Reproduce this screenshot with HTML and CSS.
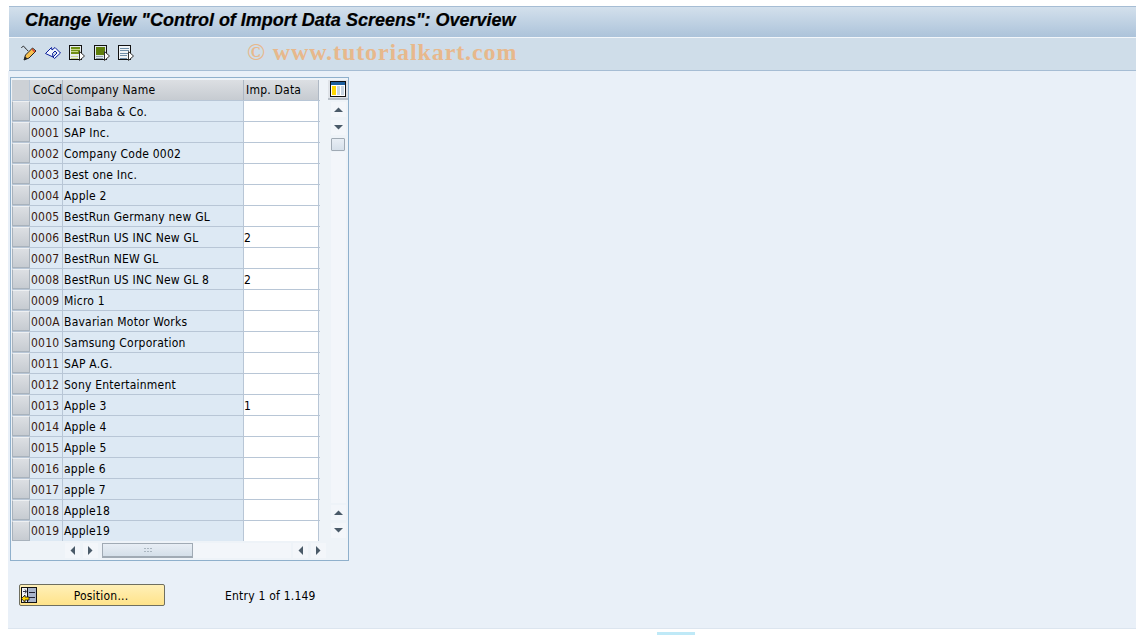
FILE: index.html
```html
<!DOCTYPE html>
<html lang="en">
<head>
<meta charset="utf-8">
<title>Change View</title>
<link rel="stylesheet" href="styles.css">
</head>
<body>
<svg class="defs" width="0" height="0">
  <defs>
    <g id="arrow-up"><path d="M1 6 L5.500 1.500 L10 6 Z" fill="#4a5a68"/></g>
    <g id="arrow-down"><path d="M1 1 L10 1 L5.500 5.500 Z" fill="#4a5a68"/></g>
    <g id="arrow-left"><path d="M6 1 L6 10 L1.500 5.500 Z" fill="#4a5a68"/></g>
    <g id="arrow-right"><path d="M1 1 L1 10 L5.500 5.500 Z" fill="#4a5a68"/></g>
  </defs>
</svg>
<div class="screen">
  <header class="title-bar"><h1 class="title">Change View "Control of Import Data Screens": Overview</h1></header>
  <div class="toolbar">
    <div class="tools">
      <svg class="tool" width="16" height="16" viewBox="0 0 16 16"><path d="M0.500 3 C1.500 0.500 3.500 1 4 3 C4.500 4 6 4 7 6" fill="none" stroke="#222" stroke-width="1"/><path d="M3 15 L4.500 10 L11.500 3 L15 6 L8 13 Z" fill="#f7c04e" stroke="#222" stroke-width="1"/><path d="M3 15 L4 11.500 L6.500 13.500 Z" fill="#222"/><path d="M11 4 L14 7" stroke="#d8452e" stroke-width="1.500"/></svg>
      <svg class="tool" width="16" height="16" viewBox="0 0 16 16"><path d="M0.500 8.500 L6.500 2.500 L7 5 L10 2.500 L15.500 8 L9.500 13.500 L8 12 L12 8 L10 6 L7.500 8.500 L8 12 Z" fill="#f2f6ff" stroke="#0a1e9c" stroke-width="1" stroke-linejoin="round"/></svg>
      <svg class="tool" width="16" height="16" viewBox="0 0 16 16"><rect x="0.500" y="0.500" width="12" height="14" fill="#e8eef0" stroke="#111"/><rect x="2" y="2" width="9" height="7" fill="#6f8f14"/><path d="M2 4.500 H11 M2 6.500 H9 M2 11.500 H9 M2 13.500 H9" stroke="#c9d88a"/><path d="M10.500 6.500 L15.500 11 L10.500 15.500 Z" fill="#fff" stroke="#333"/></svg>
      <svg class="tool shifted" width="16" height="16" viewBox="0 0 16 16"><rect x="0.500" y="0.500" width="12" height="14" fill="#dfe8ec" stroke="#111"/><rect x="2" y="2" width="9" height="8" fill="#5f7f0c"/><path d="M2 11.500 H9 M2 13.500 H9" stroke="#8a9aa8"/><path d="M10.500 6.500 L15.500 11 L10.500 15.500 Z" fill="#fff" stroke="#333"/></svg>
      <svg class="tool" width="16" height="16" viewBox="0 0 16 16"><rect x="0.500" y="0.500" width="12" height="14" fill="#eef3f6" stroke="#111"/><path d="M2 3.500 H11 M2 5.500 H11 M2 8.500 H10 M2 10.500 H9 M2 13.500 H9" stroke="#6f8ea8"/><path d="M10.500 6.500 L15.500 11 L10.500 15.500 Z" fill="#fff" stroke="#333"/></svg>
    </div>
    <div class="watermark">© www.tutorialkart.com</div>
  </div>
  <main class="content">
    <section class="table-box">
      <div class="table-main">
        <div class="grid">
          <div class="row head"><div class="sel"></div><div class="c1">CoCd</div><div class="c2">Company Name</div><div class="c3">Imp. Data</div></div>
          <div class="row"><div class="sel"></div><div class="c1">0000</div><div class="c2">Sai Baba &amp; Co.</div><div class="c3"></div></div>
          <div class="row"><div class="sel"></div><div class="c1">0001</div><div class="c2">SAP Inc.</div><div class="c3"></div></div>
          <div class="row"><div class="sel"></div><div class="c1">0002</div><div class="c2">Company Code 0002</div><div class="c3"></div></div>
          <div class="row"><div class="sel"></div><div class="c1">0003</div><div class="c2">Best one Inc.</div><div class="c3"></div></div>
          <div class="row"><div class="sel"></div><div class="c1">0004</div><div class="c2">Apple 2</div><div class="c3"></div></div>
          <div class="row"><div class="sel"></div><div class="c1">0005</div><div class="c2">BestRun Germany new GL</div><div class="c3"></div></div>
          <div class="row"><div class="sel"></div><div class="c1">0006</div><div class="c2">BestRun US INC New GL</div><div class="c3">2</div></div>
          <div class="row"><div class="sel"></div><div class="c1">0007</div><div class="c2">BestRun NEW GL</div><div class="c3"></div></div>
          <div class="row"><div class="sel"></div><div class="c1">0008</div><div class="c2">BestRun US INC New GL 8</div><div class="c3">2</div></div>
          <div class="row"><div class="sel"></div><div class="c1">0009</div><div class="c2">Micro 1</div><div class="c3"></div></div>
          <div class="row"><div class="sel"></div><div class="c1">000A</div><div class="c2">Bavarian Motor Works</div><div class="c3"></div></div>
          <div class="row"><div class="sel"></div><div class="c1">0010</div><div class="c2">Samsung Corporation</div><div class="c3"></div></div>
          <div class="row"><div class="sel"></div><div class="c1">0011</div><div class="c2">SAP A.G.</div><div class="c3"></div></div>
          <div class="row"><div class="sel"></div><div class="c1">0012</div><div class="c2">Sony Entertainment</div><div class="c3"></div></div>
          <div class="row"><div class="sel"></div><div class="c1">0013</div><div class="c2">Apple 3</div><div class="c3">1</div></div>
          <div class="row"><div class="sel"></div><div class="c1">0014</div><div class="c2">Apple 4</div><div class="c3"></div></div>
          <div class="row"><div class="sel"></div><div class="c1">0015</div><div class="c2">Apple 5</div><div class="c3"></div></div>
          <div class="row"><div class="sel"></div><div class="c1">0016</div><div class="c2">apple 6</div><div class="c3"></div></div>
          <div class="row"><div class="sel"></div><div class="c1">0017</div><div class="c2">apple 7</div><div class="c3"></div></div>
          <div class="row"><div class="sel"></div><div class="c1">0018</div><div class="c2">Apple18</div><div class="c3"></div></div>
          <div class="row last"><div class="sel"></div><div class="c1">0019</div><div class="c2">Apple19</div><div class="c3"></div></div>
        </div>
        <div class="vscroll">
          <div class="config"><svg width="16" height="16" viewBox="0 0 16 16"><rect x="0.500" y="0.500" width="15" height="15" fill="#fff" stroke="#111"/><rect x="1" y="1" width="14" height="3" fill="#1d5f9e"/><rect x="2" y="5" width="4" height="9" fill="#ffd800"/><rect x="7" y="5" width="3" height="9" fill="#c9d6e2"/><rect x="11" y="5" width="3" height="9" fill="#c9d6e2"/></svg></div>
          <div class="sbtn"><svg width="11" height="7"><use href="#arrow-up"/></svg></div>
          <div class="sbtn"><svg width="11" height="7"><use href="#arrow-down"/></svg></div>
          <div class="vthumb"></div>
          <div class="vtrack"></div>
          <div class="sbtn"><svg width="11" height="7"><use href="#arrow-up"/></svg></div>
          <div class="sbtn"><svg width="11" height="7"><use href="#arrow-down"/></svg></div>
        </div>
      </div>
      <div class="hscroll">
        <div class="sbtn h"><svg width="7" height="11"><use href="#arrow-left"/></svg></div>
        <div class="sbtn h"><svg width="7" height="11"><use href="#arrow-right"/></svg></div>
        <div class="hthumb"><svg width="8" height="5"><path d="M0 0.500h2M3 0.500h2M6 0.500h2M0 3.500h2M3 3.500h2M6 3.500h2" stroke="#aab6c0" stroke-width="1"/></svg></div>
        <div class="htrack"></div>
        <div class="sbtn h"><svg width="7" height="11"><use href="#arrow-left"/></svg></div>
        <div class="sbtn h"><svg width="7" height="11"><use href="#arrow-right"/></svg></div>
      </div>
    </section>
    <div class="actions">
      <button class="position" type="button">
        <svg class="pos-icon" width="16" height="16" viewBox="0 0 16 16"><rect x="0.500" y="0.500" width="15" height="15" fill="#a8b4cc" stroke="#111"/><rect x="1" y="1" width="5" height="14" fill="#f2f4f8"/><path d="M6.500 1V15" stroke="#111"/><path d="M8 5.500H14M8 10.500H14" stroke="#223"/><path d="M2 4.500H5M4 2.500L5.500 4.500L4 6.500" fill="none" stroke="#334" stroke-width="1"/><path d="M0.500 11.500L4 8V10H8V13H4V15.500Z" fill="#ffd400" stroke="#111" stroke-width="0.800"/></svg>
        <span class="pos-label">Position...</span>
      </button>
      <span class="entry">Entry 1 of 1.149</span>
    </div>
  </main>
</div>
<div class="corner-mark"></div>
</body>
</html>
```
FILE: styles.css
```css
html, body { margin: 0; padding: 0; background: #fff; height: 635px; overflow: hidden; }
body { position: relative; font-family: "DejaVu Sans Condensed", "DejaVu Sans", sans-serif; font-size: 12px; letter-spacing: 0.220px; color: #000; }
.defs { position: absolute; }
.screen { margin-left: 8px; padding-top: 6px; display: flex; flex-direction: column; }
.title-bar {
  margin-left: 1px; display: flex; align-items: center; padding: 0 0 3px 16px; height: 27px;
  background: linear-gradient(#d3e0ec, #acc3da); border-top: 1px solid #a6bdd4;
  border-bottom: 1px solid #f2f6fa;
}
.title { margin: 0; font: italic bold 18px "Liberation Sans", sans-serif; letter-spacing: 0; -webkit-text-stroke: 0.200px #000; color: #000; white-space: nowrap; }
.toolbar {
  height: 29px; margin-left: 1px; display: flex; align-items: center; padding: 0 0 3px 12px;
  background: #cfdde9; border-bottom: 1px solid #a6bdd4;
}
.tools { display: flex; gap: 8px; width: 226px; }
.tool { display: block; }
.shifted { margin-left: 1px; }
.watermark { font: bold 24px "Liberation Serif", serif; color: #e7b88c; white-space: nowrap; letter-spacing: 0.900px; }
.content { background: #e9f0f8; border-bottom: 1px solid #dce5ef; padding: 6px 0 0 2px; box-sizing: border-box; height: 558px; }
.table-box { width: 339px; height: 484px; box-sizing: border-box; border: 1px solid #8fb0cc; padding: 2px 0 0 1px; background: #eef3f8; }
.table-main { display: flex; height: 461px; }
.grid { width: 308px; }
.row { display: flex; height: 21px; box-sizing: border-box; border-bottom: 1px solid #b8c6d6; line-height: 22px; }
.row.last { border-bottom: 0; height: 20px; line-height: 20px; }
.head { line-height: 21px; }
.sel { width: 18px; box-sizing: border-box; background: linear-gradient(#dcdfe3, #c6cbd1); border: 1px solid #a8b2bc; border-top-color: #eef0f2; }
.c1 { width: 33px; box-sizing: border-box; padding-left: 1px; background: #dde9f4; border-right: 1px solid #b8c6d6; color: #3a1a10; white-space: nowrap; overflow: hidden; }
.c2 { width: 181px; box-sizing: border-box; padding-left: 1px; background: #dde9f4; border-right: 1px solid #b8c6d6; white-space: nowrap; overflow: hidden; }
.c3 { width: 75px; box-sizing: border-box; padding-left: 0; background: #fff; border-right: 1px solid #b8c6d6; }
.head .sel { background: #cdd1d6; border: 0; border-right: 1px solid #b8c6d6; }
.head .c1, .head .c2, .head .c3 { background: linear-gradient(#dcdfe3, #c6cbd1); border-right: 1px solid #aeb8c4; color: #000; padding-left: 3px; }
.head .c3 { padding-left: 2px; }
.vscroll { width: 20px; margin-left: 8px; display: flex; flex-direction: column; align-items: center; }
.config { width: 20px; height: 20px; display: flex; align-items: center; justify-content: center; background: #dfe3e8; border-bottom: 2px solid #b8c0c8; box-sizing: border-box; margin-bottom: 2px; flex: none; }
.sbtn { width: 15px; height: 15px; margin-bottom: 3px; background: #f3f6fa; display: flex; align-items: center; justify-content: center; flex: none; }
.vthumb { width: 14px; height: 13px; box-sizing: border-box; border: 1px solid #a0aab4; border-radius: 1px; background: linear-gradient(#e8eef5, #d6e0ea); flex: none; margin-bottom: 1px; }
.vtrack { width: 15px; height: 351px; background: #f3f6fa; flex: none; margin-bottom: 2px; }
.hscroll { display: flex; align-items: center; height: 19px; padding-left: 53px; }
.sbtn.h { margin: 0 3px 0 0; }
.hthumb { width: 91px; height: 15px; margin-left: 1px; box-sizing: border-box; border: 1px solid #a0aab4; border-bottom-width: 2px; background: linear-gradient(#e8eef5, #d4dfe9); display: flex; align-items: center; justify-content: center; }
.htrack { width: 98px; height: 15px; background: #f3f6fa; margin-right: 2px; }
.actions { display: flex; align-items: center; height: 22px; margin-top: 23px; padding-left: 9px; }
.position {
  width: 146px; height: 22px; padding: 1px 0 0 18px; position: relative; display: flex; align-items: center; justify-content: center;
  border: 1px solid #6f6f60; border-radius: 2px; background: linear-gradient(#fff0b8, #ffe38a);
  font: 12px "DejaVu Sans Condensed", "DejaVu Sans", sans-serif; letter-spacing: 0.220px; color: #000;
}
.pos-icon { position: absolute; left: 1px; top: 2px; }
.entry { margin-left: 60px; padding-top: 2px; }
.corner-mark { position: absolute; left: 657px; top: 632px; width: 38px; height: 3px; background: #bfe9f7; }
```
